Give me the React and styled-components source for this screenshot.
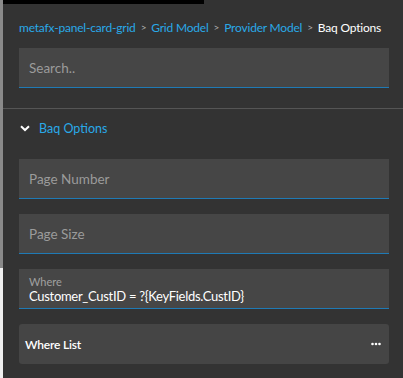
import React from "react";
import styled, { createGlobalStyle } from "styled-components";

const GlobalStyle = createGlobalStyle`
  html, body {
    margin: 0;
    padding: 0;
    background: #333333;
  }
  body {
    font-family: Lato, "Noto Sans", sans-serif;
  }
`;

const Frame = styled.div`
  display: flex;
  width: 403px;
  height: 378px;
  overflow: hidden;
  background: #333333;
`;

const Scrollbar = styled.div`
  width: 3px;
  flex-shrink: 0;
  display: flex;
  flex-direction: column;
  background: #f0f0f0;
  .thumb {
    height: 268px;
    background: #8a8a8a;
  }
`;

const Panel = styled.div`
  flex: 1;
  min-width: 0;
  display: flex;
  flex-direction: column;
`;

const TopBar = styled.div`
  width: 201px;
  height: 4px;
  background: #000000;
`;

const Top = styled.div`
  padding: 13px 14px 20px 16px;
  border-bottom: 1px solid #555555;
`;

const Crumbs = styled.div`
  display: flex;
  align-items: center;
  height: 20px;
  font-size: 12px;
  letter-spacing: -0.2px;
  white-space: nowrap;
  margin-bottom: 11px;
`;

const Crumb = styled.span`
  color: ${(p) => (p.current ? "#ffffff" : "#29a9e8")};
`;

const Sep = styled.span`
  color: #b0b0b0;
  font-size: 10px;
  margin: 0 5px;
`;

const Field = styled.div`
  height: 40px;
  box-sizing: border-box;
  background: #464646;
  border-bottom: 1px solid #1f7ab5;
  padding: 0 10px;
  display: flex;
  flex-direction: column;
  justify-content: center;
`;

const Placeholder = styled.span`
  color: #9b9b9b;
  font-size: 13.5px;
`;

const Label = styled.span`
  color: #a0a0a0;
  font-size: 11px;
  line-height: 13px;
  margin-top: 2px;
`;

const Value = styled.span`
  color: #ffffff;
  font-size: 13px;
  letter-spacing: -0.3px;
  line-height: 17px;
`;

const Body = styled.div`
  padding: 0 14px 0 16px;
  display: flex;
  flex-direction: column;
  gap: 15px;
`;

const Header = styled.div`
  display: flex;
  align-items: center;
  gap: 9px;
  height: 38px;
  margin-bottom: -3px;
  padding-left: 1px;
  color: #29a9e8;
  font-size: 12.5px;
`;

const ListRow = styled.div`
  height: 40px;
  border-radius: 3px;
  background: #454545;
  display: flex;
  align-items: center;
  justify-content: space-between;
  padding: 0 8px 0 6px;
  color: #ffffff;
  font-size: 12px;
  letter-spacing: -0.2px;
  font-weight: 600;
`;

const Chevron = () => (
  <svg width="10" height="7" viewBox="0 0 10 7">
    <path d="M1 1.2 L5 5 L9 1.2" fill="none" stroke="#ffffff" strokeWidth="2" />
  </svg>
);

const Dots = () => (
  <svg width="10" height="4" viewBox="0 0 10 4">
    <circle cx="1.5" cy="2" r="1.3" fill="#ffffff" />
    <circle cx="5" cy="2" r="1.3" fill="#ffffff" />
    <circle cx="8.5" cy="2" r="1.3" fill="#ffffff" />
  </svg>
);

export default function App() {
  return (
    <Frame>
      <GlobalStyle />
      <Scrollbar>
        <div className="thumb" />
      </Scrollbar>
      <Panel>
        <TopBar />
        <Top>
          <Crumbs>
            <Crumb>metafx-panel-card-grid</Crumb>
            <Sep>&gt;</Sep>
            <Crumb>Grid Model</Crumb>
            <Sep>&gt;</Sep>
            <Crumb>Provider Model</Crumb>
            <Sep>&gt;</Sep>
            <Crumb current>Baq Options</Crumb>
          </Crumbs>
          <Field>
            <Placeholder>Search..</Placeholder>
          </Field>
        </Top>
        <Body>
          <Header>
            <Chevron />
            Baq Options
          </Header>
          <Field>
            <Placeholder>Page Number</Placeholder>
          </Field>
          <Field>
            <Placeholder>Page Size</Placeholder>
          </Field>
          <Field>
            <Label>Where</Label>
            <Value>Customer_CustID = ?{"{KeyFields.CustID}"}</Value>
          </Field>
          <ListRow>
            Where List
            <Dots />
          </ListRow>
        </Body>
      </Panel>
    </Frame>
  );
}
